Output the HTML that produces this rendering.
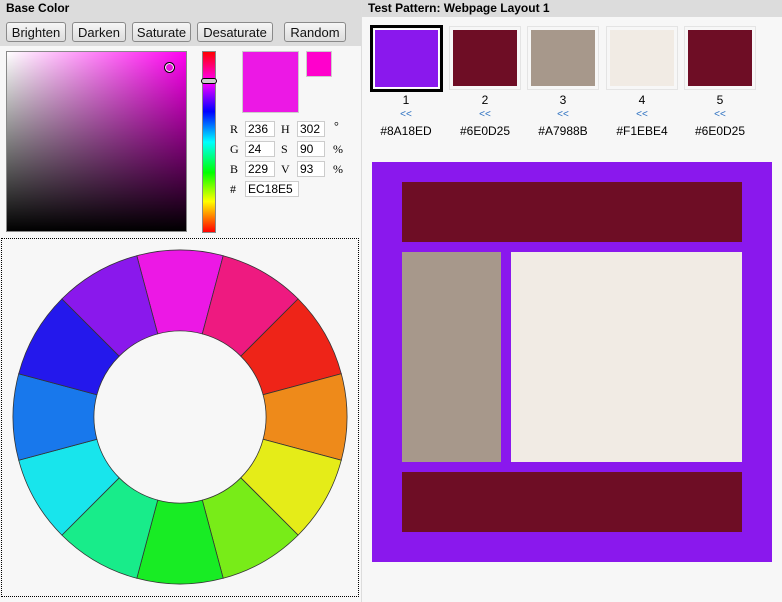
<!DOCTYPE html>
<html><head><style>
body{margin:0;width:782px;height:602px;background:#f7f7f7;font-family:"Liberation Sans",sans-serif;font-size:12px;position:relative;overflow:hidden}
.a{position:absolute}
.hdr{background:#dcdcdc;font-weight:bold;font-size:12px;padding:0 0 0 6px;line-height:16px}
.btn{position:absolute;top:22px;height:20px;border:1px solid #8a8a8a;border-radius:3px;background:linear-gradient(#f6f6f6,#dddddd);font-size:13px;text-align:center;line-height:19px;box-sizing:border-box;color:#111}
.in{position:absolute;height:16px;border:1px solid #ccc;background:#fff;box-sizing:border-box;font-size:12px;line-height:14px;padding-left:2px}
.lb{position:absolute;font-family:"Liberation Serif",serif;font-size:12px}
.sw{position:absolute;top:26px;width:66px;height:64px;box-sizing:border-box;border:1px solid #e4e4e4;padding:3px}
.sw div{width:100%;height:100%}
.t{position:absolute;width:78px;text-align:center;font-size:12px}
</style></head><body>
<div class="a hdr" style="left:0;top:0;width:355px;height:46px">Base Color</div>
<div class="btn" style="left:6px;width:60px">Brighten</div>
<div class="btn" style="left:72px;width:54px">Darken</div>
<div class="btn" style="left:132px;width:59px">Saturate</div>
<div class="btn" style="left:197px;width:76px">Desaturate</div>
<div class="btn" style="left:284px;width:62px">Random</div>
<div class="a" style="left:361px;top:0;width:1px;height:602px;background:#ddd"></div>
<div class="a hdr" style="left:362px;top:0;width:414px;height:17px">Test Pattern: Webpage Layout 1</div>

<div class="a" style="left:6px;top:51px;width:181px;height:181px;border:1px solid #888;box-sizing:border-box;background:linear-gradient(to bottom,rgba(0,0,0,0),#000),linear-gradient(to right,#fff,#ff00f0)"></div>
<div class="a" style="left:164px;top:62px;width:9px;height:9px;border:1px solid #000;border-radius:50%;box-shadow:0 0 0 1px #fff inset"></div>
<div class="a" style="left:202px;top:51px;width:14px;height:182px;border:1px solid #888;box-sizing:border-box;background:linear-gradient(to bottom,#f00 0%,#f0f 17%,#00f 33%,#0ff 50%,#0f0 67%,#ff0 83%,#f00 100%)"></div>
<div class="a" style="left:201px;top:78px;width:14px;height:4px;border:1px solid #000;border-radius:3px;background:#ccc"></div>
<div class="a" style="left:242px;top:51px;width:57px;height:62px;background:#ec18e5;border:1px solid #ccc;box-sizing:border-box"></div>
<div class="a" style="left:306px;top:51px;width:26px;height:26px;background:#ff00cc;border:1px solid #ccc;box-sizing:border-box"></div>
<span class="lb" style="left:230px;top:122px">R</span><div class="in" style="left:245px;top:121px;width:30px">236</div>
<span class="lb" style="left:281px;top:122px">H</span><div class="in" style="left:297px;top:121px;width:28px">302</div><span class="lb" style="left:334px;top:119px">°</span>
<span class="lb" style="left:230px;top:142px">G</span><div class="in" style="left:245px;top:141px;width:30px">24</div>
<span class="lb" style="left:281px;top:142px">S</span><div class="in" style="left:297px;top:141px;width:28px">90</div><span class="lb" style="left:333px;top:142px">%</span>
<span class="lb" style="left:230px;top:162px">B</span><div class="in" style="left:245px;top:161px;width:30px">229</div>
<span class="lb" style="left:281px;top:162px">V</span><div class="in" style="left:297px;top:161px;width:28px">93</div><span class="lb" style="left:333px;top:162px">%</span>
<span class="lb" style="left:230px;top:182px">#</span><div class="in" style="left:245px;top:181px;width:54px">EC18E5</div>

<div class="a" style="left:1px;top:238px;width:358px;height:359px;border:1px dotted #000;box-sizing:border-box"></div>
<svg class="a" style="left:0;top:0" width="360" height="602" stroke="#333" stroke-width="0.8">
<path fill="#ec18e5" d="M136.8 255.7A167 167 0 0 1 223.2 255.7L202.3 333.9A86 86 0 0 0 157.7 333.9Z"/>
<path fill="#ee1a80" d="M223.2 255.7A167 167 0 0 1 298.1 298.9L240.8 356.2A86 86 0 0 0 202.3 333.9Z"/>
<path fill="#ee2418" d="M298.1 298.9A167 167 0 0 1 341.3 373.8L263.1 394.7A86 86 0 0 0 240.8 356.2Z"/>
<path fill="#ee8a1a" d="M341.3 373.8A167 167 0 0 1 341.3 460.2L263.1 439.3A86 86 0 0 0 263.1 394.7Z"/>
<path fill="#e5ec18" d="M341.3 460.2A167 167 0 0 1 298.1 535.1L240.8 477.8A86 86 0 0 0 263.1 439.3Z"/>
<path fill="#78ec18" d="M298.1 535.1A167 167 0 0 1 223.2 578.3L202.3 500.1A86 86 0 0 0 240.8 477.8Z"/>
<path fill="#18ec24" d="M223.2 578.3A167 167 0 0 1 136.8 578.3L157.7 500.1A86 86 0 0 0 202.3 500.1Z"/>
<path fill="#18ec8a" d="M136.8 578.3A167 167 0 0 1 61.9 535.1L119.2 477.8A86 86 0 0 0 157.7 500.1Z"/>
<path fill="#18e5ec" d="M61.9 535.1A167 167 0 0 1 18.7 460.2L96.9 439.3A86 86 0 0 0 119.2 477.8Z"/>
<path fill="#1878ec" d="M18.7 460.2A167 167 0 0 1 18.7 373.8L96.9 394.7A86 86 0 0 0 96.9 439.3Z"/>
<path fill="#2418ec" d="M18.7 373.8A167 167 0 0 1 61.9 298.9L119.2 356.2A86 86 0 0 0 96.9 394.7Z"/>
<path fill="#8a18ec" d="M61.9 298.9A167 167 0 0 1 136.8 255.7L157.7 333.9A86 86 0 0 0 119.2 356.2Z"/>
</svg>

<div class="sw" style="left:370px;border:3px solid #000;padding:1px;width:73px;height:67px;top:25px"><div style="background:#8a18ed;border:1px solid #fff;box-sizing:border-box"></div></div>
<div class="sw" style="left:449px;width:72px"><div style="background:#6e0d25"></div></div>
<div class="sw" style="left:527px;width:72px"><div style="background:#a7988b"></div></div>
<div class="sw" style="left:606px;width:72px"><div style="background:#f1ebe4"></div></div>
<div class="sw" style="left:684px;width:72px"><div style="background:#6e0d25"></div></div>
<div class="t" style="left:367px;top:93px">1</div><div class="t" style="left:446px;top:93px">2</div><div class="t" style="left:524px;top:93px">3</div><div class="t" style="left:603px;top:93px">4</div><div class="t" style="left:681px;top:93px">5</div>
<div class="t" style="left:367px;top:109px;color:#2a6fc0;font-size:10px">&lt;&lt;</div><div class="t" style="left:446px;top:109px;color:#2a6fc0;font-size:10px">&lt;&lt;</div><div class="t" style="left:524px;top:109px;color:#2a6fc0;font-size:10px">&lt;&lt;</div><div class="t" style="left:603px;top:109px;color:#2a6fc0;font-size:10px">&lt;&lt;</div><div class="t" style="left:681px;top:109px;color:#2a6fc0;font-size:10px">&lt;&lt;</div>
<div class="t" style="left:367px;top:124px">#8A18ED</div><div class="t" style="left:446px;top:124px">#6E0D25</div><div class="t" style="left:524px;top:124px">#A7988B</div><div class="t" style="left:603px;top:124px">#F1EBE4</div><div class="t" style="left:681px;top:124px">#6E0D25</div>

<div class="a" style="left:372px;top:162px;width:400px;height:400px;background:#8a18ed"></div>
<div class="a" style="left:402px;top:182px;width:340px;height:60px;background:#6e0d25"></div>
<div class="a" style="left:402px;top:252px;width:99px;height:210px;background:#a7988b"></div>
<div class="a" style="left:511px;top:252px;width:231px;height:210px;background:#f1ebe4"></div>
<div class="a" style="left:402px;top:472px;width:340px;height:60px;background:#6e0d25"></div>
</body></html>
